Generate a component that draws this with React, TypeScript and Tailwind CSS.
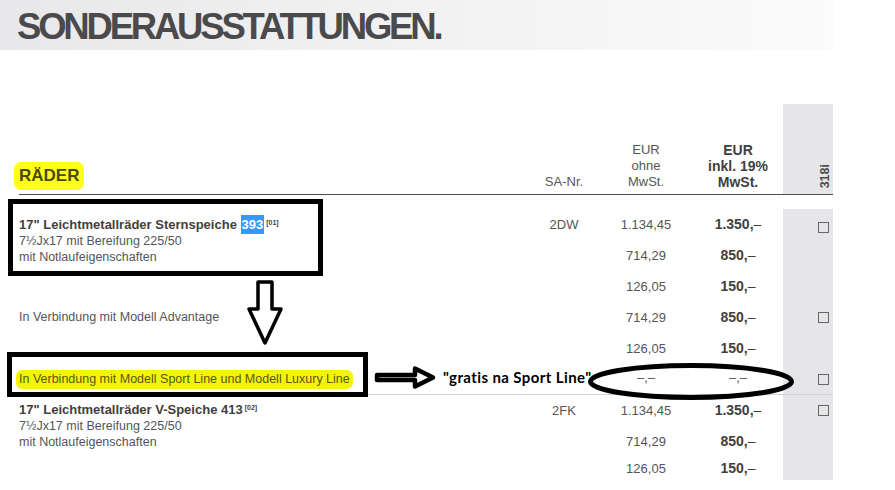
import React from "react";

const font = { fontFamily: '"Liberation Sans", Arial, sans-serif' };

function Box() {
  return <div className="w-[11px] h-[11px] border border-[#666] bg-transparent" />;
}

function Line({ children, bold = false, h = "h-[31px]" }: { children?: React.ReactNode; bold?: boolean; h?: string }) {
  return (
    <div
      className={`${h} flex items-center justify-center whitespace-nowrap ${
        bold ? "font-bold text-[14px] text-[#3f3f3f]" : "text-[13px] text-[#555]"
      }`}
    >
      {children}
    </div>
  );
}

function Dash() {
  return <span className="font-normal">–</span>;
}

export default function App() {
  return (
    <div className="relative w-[895px] h-[490px] bg-white overflow-hidden" style={font}>
      {/* Title bar */}
      <div className="h-[50px] w-[833px] bg-linear-to-r from-[#e8e8ea] to-[#fbfbfb] pl-[17px] pt-[9px]">
        <h1 className="text-[36.5px] leading-none font-bold tracking-[-3.2px] text-[#4a4a4c]">SONDERAUSSTATTUNGEN.</h1>
      </div>

      {/* Table */}
      <div className="ml-[19px] w-[814px] mt-[54px]">
        {/* header */}
        <div className="flex h-[91px] border-b border-[#4d4d4d]">
          <div className="flex-1 flex items-end pb-[4px]">
            <span className="-ml-[5px] px-[5px] py-[5px] rounded-[7px] bg-[#ffff1a] text-[17px] leading-[18px] font-bold text-[#4a4a10]">
              RÄDER
            </span>
          </div>
          <div className="w-[60px] flex items-end justify-center pb-[4px] text-[13px] leading-[16px] text-[#555]">SA-Nr.</div>
          <div className="w-[104px] flex flex-col items-center justify-end pb-[4px] text-[13px] leading-[16px] text-[#555]">
            <span>EUR</span>
            <span>ohne</span>
            <span>MwSt.</span>
          </div>
          <div className="w-[80px] flex flex-col items-center justify-end pb-[4px] text-[14px] leading-[16px] font-bold text-[#3f3f3f] whitespace-nowrap">
            <span>EUR</span>
            <span>inkl. 19%</span>
            <span>MwSt.</span>
          </div>
          <div className="w-[5px]" />
          <div className="w-[50px] bg-[#e6e6e8] flex items-end justify-end pr-[1px] pb-[6px]">
            <span className="[writing-mode:vertical-rl] rotate-180 text-[12.5px] font-bold text-[#4d4d4d] leading-[13px]">318i</span>
          </div>
        </div>
        <div className="h-[14px]" />

        {/* Group A */}
        <div className="flex">
          <div className="flex-1 pt-[8px] text-[12.5px] leading-[16px] text-[#555]">
            <div className="font-bold text-[13px] text-[#3f3f3f]">
              17" Leichtmetallräder Sternspeiche{" "}
              <span className="bg-[#3399ff] text-white px-[1px] py-[2px]">393</span>
              <sup className="text-[7px] font-bold ml-[2px] -top-[4px]">[01]</sup>
            </div>
            <div>7½Jx17 mit Bereifung 225/50</div>
            <div>mit Notlaufeigenschaften</div>
          </div>
          <div className="w-[60px]">
            <Line>2DW</Line>
          </div>
          <div className="w-[104px]">
            <Line>1.134,45</Line>
            <Line>714,29</Line>
            <Line>126,05</Line>
          </div>
          <div className="w-[80px]">
            <Line bold>
              1.350,<Dash />
            </Line>
            <Line bold>
              850,<Dash />
            </Line>
            <Line bold>
              150,<Dash />
            </Line>
          </div>
          <div className="w-[5px]" />
          <div className="w-[50px] bg-[#e6e6e8] flex justify-end pr-[4px] pt-[13px]">
            <Box />
          </div>
        </div>

        {/* Group B */}
        <div className="flex">
          <div className="flex-1 h-[31px] flex items-center text-[12.5px] text-[#555]">In Verbindung mit Modell Advantage</div>
          <div className="w-[60px]" />
          <div className="w-[104px]">
            <Line>714,29</Line>
            <Line>126,05</Line>
          </div>
          <div className="w-[80px]">
            <Line bold>
              850,<Dash />
            </Line>
            <Line bold>
              150,<Dash />
            </Line>
          </div>
          <div className="w-[5px]" />
          <div className="w-[50px] bg-[#e6e6e8] flex justify-end pr-[4px] pt-[10px]">
            <Box />
          </div>
        </div>

        {/* Group C */}
        <div className="flex h-[31px] border-b border-[#d2d2d2]">
          <div className="flex-1 flex items-center">
            <span className="-ml-[3px] px-[3px] py-[2px] rounded-[6px] bg-[#f4f40a] text-[12.5px] leading-[15px] text-[#58580c] whitespace-nowrap">
              In Verbindung mit Modell Sport Line und Modell Luxury Line
            </span>
          </div>
          <div className="w-[60px]" />
          <div className="w-[104px]">
            <Line h="h-[28px]">–,–</Line>
          </div>
          <div className="w-[80px]">
            <Line h="h-[28px]">–,–</Line>
          </div>
          <div className="w-[5px]" />
          <div className="w-[50px] bg-[#e6e6e8] flex items-center justify-end pr-[4px]">
            <Box />
          </div>
        </div>

        {/* Group D */}
        <div className="flex h-[85px]">
          <div className="flex-1 pt-[7px] text-[12.5px] leading-[16px] text-[#555]">
            <div className="font-bold text-[13px] text-[#3f3f3f]">
              17" Leichtmetallräder V-Speiche 413
              <sup className="text-[7px] font-bold ml-[2px] -top-[4px]">[02]</sup>
            </div>
            <div>7½Jx17 mit Bereifung 225/50</div>
            <div>mit Notlaufeigenschaften</div>
          </div>
          <div className="w-[60px]">
            <Line>2FK</Line>
          </div>
          <div className="w-[104px]">
            <Line>1.134,45</Line>
            <Line>714,29</Line>
            <Line h="h-[23px]">126,05</Line>
          </div>
          <div className="w-[80px]">
            <Line bold>
              1.350,<Dash />
            </Line>
            <Line bold>
              850,<Dash />
            </Line>
            <Line bold h="h-[23px]">
              150,<Dash />
            </Line>
          </div>
          <div className="w-[5px]" />
          <div className="w-[50px] bg-[#e6e6e8] flex justify-end pr-[4px] pt-[10px]">
            <Box />
          </div>
        </div>
      </div>

      {/* Annotations overlay */}
      <svg className="absolute left-0 top-0 pointer-events-none" width="895" height="490" viewBox="0 0 895 490">
        <rect x="10.5" y="201.5" width="310" height="72" fill="none" stroke="#000" strokeWidth="5" />
        <rect x="9.5" y="354.5" width="356" height="40" fill="none" stroke="#000" strokeWidth="5" />
        <path
          d="M258 282 L272 282 L272 309 L281 309 L265 343 L249 309 L258 309 Z"
          fill="#fff"
          stroke="#000"
          strokeWidth="3.5"
          strokeLinejoin="round"
        />
        <path
          d="M377 375 L415 375 L415 368.5 L433 377.5 L415 386.5 L415 380 L377 380 Z"
          fill="#fff"
          stroke="#000"
          strokeWidth="4.5"
          strokeLinejoin="round"
        />
        <ellipse cx="691" cy="381.5" rx="100.5" ry="16" fill="none" stroke="#000" strokeWidth="5" />
      </svg>
      <div
        className="absolute left-[443px] top-[368px] text-[15px] leading-[18px] font-bold tracking-[0.4px] text-black whitespace-nowrap"
        style={{ fontFamily: 'Lato, "Open Sans", sans-serif' }}
      >
        "gratis na Sport Line"
      </div>
    </div>
  );
}
